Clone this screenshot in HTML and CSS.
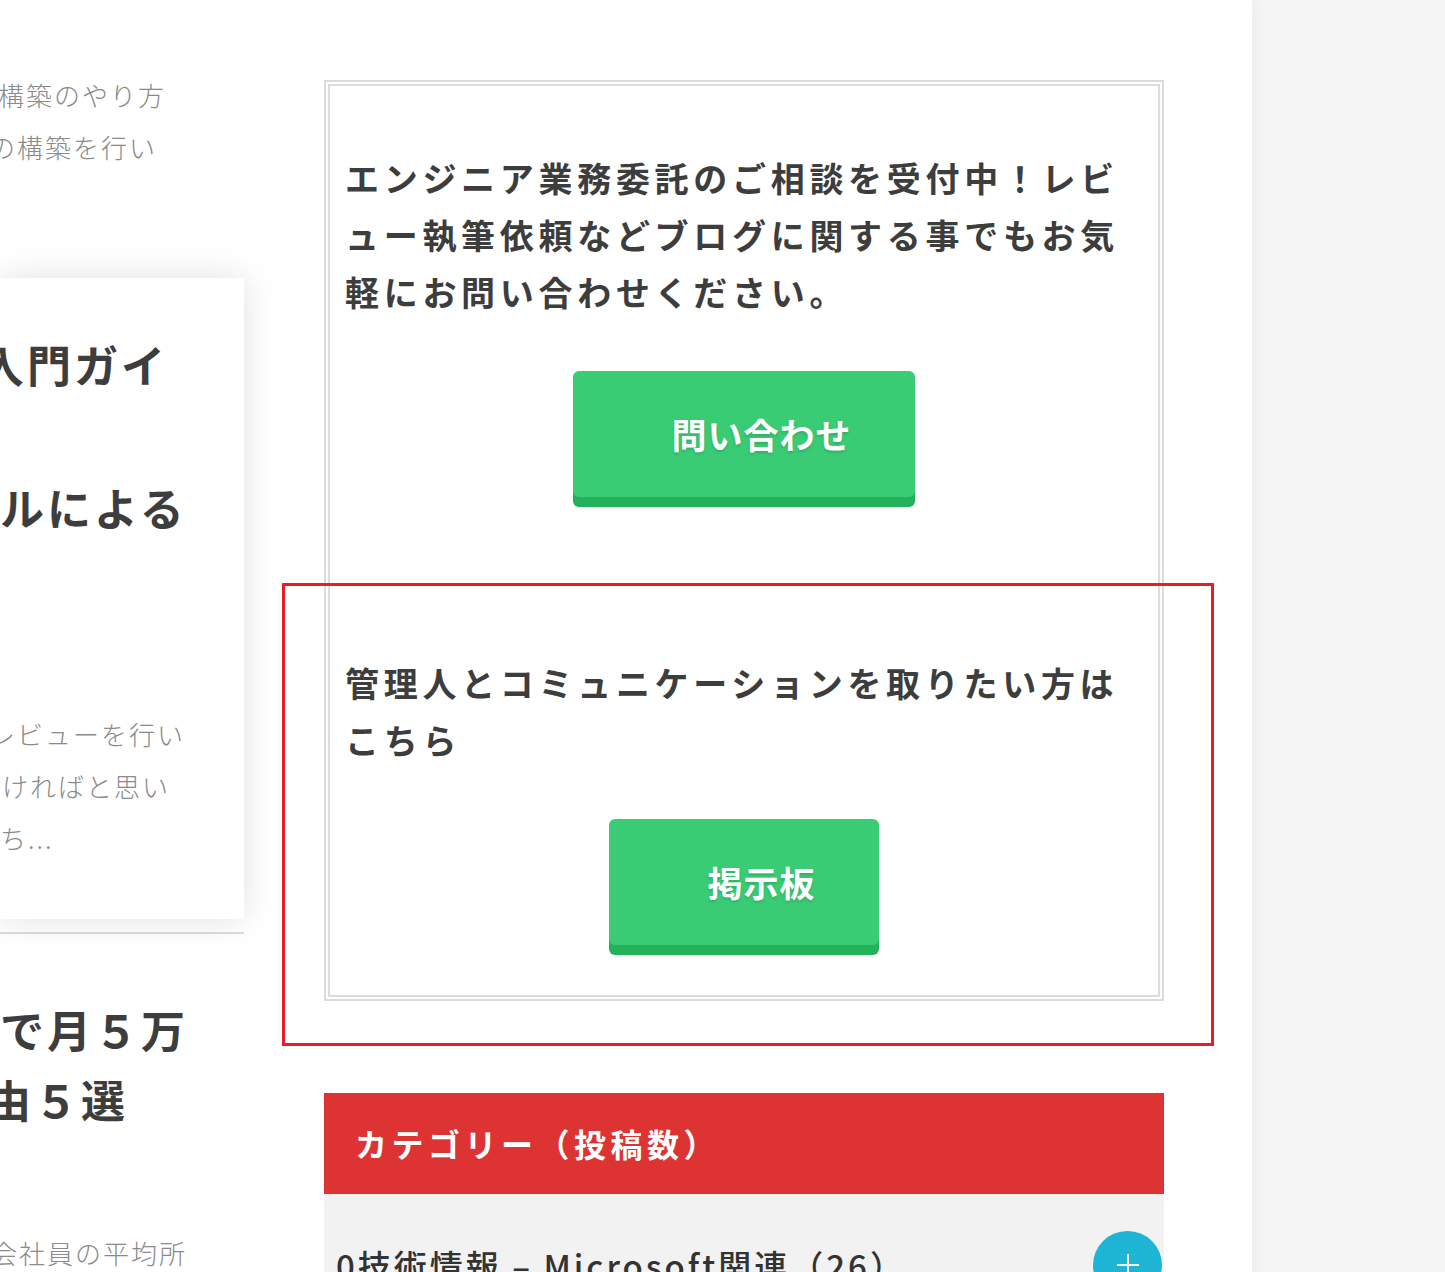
FILE: index.html
```html
<!DOCTYPE html>
<html lang="ja">
<head>
<meta charset="utf-8">
<title>サイドバー</title>
<link rel="stylesheet" href="styles.css">
</head>
<body>
<div class="page">
  <div class="main">
    <div class="left">
      <article class="card card1">
        <div class="excerpt">
          <div class="ln o2">構築のやり方</div>
          <div class="ln o11">の構築を行い</div>
        </div>
      </article>
      <article class="card card2">
        <h2 class="title">
          <span class="ln o20">入門ガイ</span>
          <span class="ln">&nbsp;</span>
          <span class="ln">ルによる</span>
        </h2>
        <div class="excerpt ex2">
          <div class="ln o11">レビューを行い</div>
          <div class="ln o-2">ければと思い</div>
          <div class="ln">ち...</div>
        </div>
      </article>
      <article class="card card3">
        <h2 class="title">
          <span class="ln">で月５万</span>
          <span class="ln o13">由５選</span>
        </h2>
        <div class="excerpt ex3">
          <div class="ln o9">会社員の平均所</div>
        </div>
      </article>
    </div>
    <aside class="side">
      <div class="widget box">
        <p class="lead">エンジニア業務委託のご相談を受付中！レビュー執筆依頼などブログに関する事でもお気軽にお問い合わせください。</p>
        <div class="btn-wrap"><a class="btn">問い合わせ</a></div>
        <p class="lead lead2">管理人とコミュニケーションを取りたい方はこちら</p>
        <div class="btn-wrap"><a class="btn">掲示板</a></div>
      </div>
      <div class="widget cat">
        <h3 class="cat-title">カテゴリー（投稿数）</h3>
        <ul class="cat-list">
          <li class="cat-item"><span class="cat-name">0技術情報 – Microsoft関連（26）</span><span class="toggle"></span></li>
        </ul>
      </div>
    </aside>
  </div>
  <div class="highlight"></div>
</div>
</body>
</html>
```

FILE: styles.css
```css
* { box-sizing: border-box; margin: 0; padding: 0; }
html, body { background: #f5f5f5; }
body {
  font-family: "Noto Sans CJK JP", "Noto Sans", sans-serif;
  color: #3d3d3d;
  overflow: hidden;
}
.page { position: relative; width: 1445px; height: 1272px; overflow: hidden; }
.main {
  width: 1252px;
  min-height: 1272px;
  background: #fff;
  display: flex;
  gap: 80px;
  box-shadow: 0 0 20px rgba(0, 0, 0, 0.06);
}

/* left column */
.left { width: 244px; flex: none; }
.card { background: #fff; overflow: hidden; }
.ln { display: block; white-space: nowrap; }
.o2 { margin-left: -2px; }
.o11 { margin-left: -11px; }
.o20 { margin-left: -20px; }
.o13 { margin-left: -13px; }
.o9 { margin-left: -9px; }
.o-2 { margin-left: 2px; }

.excerpt {
  font-size: 26px;
  font-weight: 300;
  letter-spacing: 2px;
  line-height: 52px;
  color: #8a8a8a;
}
.title {
  font-size: 44px;
  font-weight: 700;
  letter-spacing: 3px;
  line-height: 71.5px;
  color: #3d3d3d;
}
.card1 { height: 278px; padding-top: 69px; }
.card2 {
  position: relative;
  height: 641px;
  padding-top: 51px;
  margin-bottom: 13px;
  overflow: visible;
  box-shadow: 0 0 32px rgba(0, 0, 0, 0.12);
}
.card2 .title, .card2 .excerpt { overflow: hidden; }
.ex2 { margin-top: 164px; }
.card3 {
  border-top: 2px solid #dcdcdc;
  padding-top: 60px;
  height: 400px;
}
.card3 .title { line-height: 70px; }
.ex3 { margin-top: 93px; }

/* sidebar */
.side { width: 840px; flex: none; padding-top: 80px; }
.box {
  border: 6px double #dcdcdc;
  padding: 63px 15px 50px;
}
.lead {
  font-size: 34px;
  font-weight: 700;
  letter-spacing: 4.7px;
  line-height: 57px;
  color: #3d3d3d;
  line-break: loose;
}
.lead2 { margin-top: 157px; }
.btn-wrap { margin-top: 51px; text-align: center; height: 126px; }
.btn {
  display: inline-block;
  height: 126px;
  line-height: 126px;
  padding: 0 63px 0 98px;
  background: #3acc75;
  border-radius: 6px;
  box-shadow: 0 10px 0 #23b25b;
  color: #fff;
  font-size: 35px;
  font-weight: 700;
  letter-spacing: 1px;
  text-shadow: 0 2px 3px rgba(0, 0, 0, 0.15);
}

.cat { margin-top: 92px; }
.cat-title {
  height: 101px;
  line-height: 101px;
  padding-left: 31px;
  background: #de3333;
  color: #fff;
  font-size: 32px;
  font-weight: 700;
  letter-spacing: 4.5px;
}
.cat-list {
  list-style: none;
  background: #f2f2f2;
  padding: 37px 2px 40px 12px;
}
.cat-item {
  display: flex;
  align-items: center;
  justify-content: space-between;
  height: 68px;
}
.cat-name {
  font-size: 33px;
  font-weight: 500;
  letter-spacing: 3px;
  color: #333;
}
.toggle {
  position: relative;
  width: 69px;
  height: 68px;
  border-radius: 50%;
  background: #1eb4d4;
}
.toggle::before, .toggle::after {
  content: "";
  position: absolute;
  left: 50%;
  top: 50%;
  background: #fff;
}
.toggle::before { width: 22px; height: 2px; margin: -1px 0 0 -11px; }
.toggle::after { width: 2px; height: 22px; margin: -11px 0 0 -1px; }

/* annotation frame */
.highlight {
  position: absolute;
  left: 282px;
  top: 583px;
  width: 932px;
  height: 463px;
  border: 3px solid #ec1c24;
  pointer-events: none;
}
```
